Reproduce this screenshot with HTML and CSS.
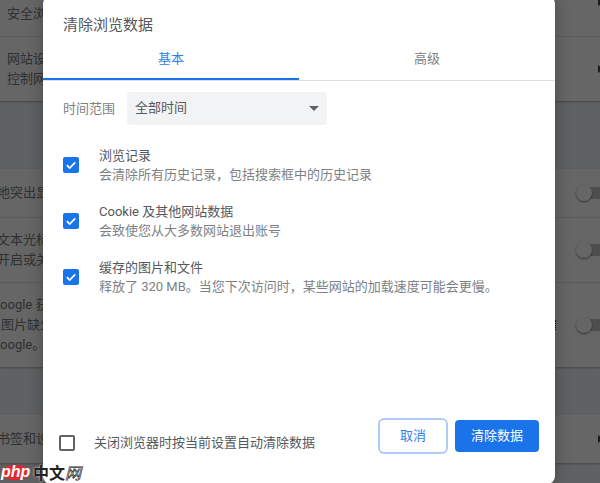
FILE: index.html
```html
<!DOCTYPE html>
<html lang="zh-CN">
<head>
<meta charset="utf-8">
<title>清除浏览数据</title>
<link rel="stylesheet" href="styles.css">
</head>
<body>
<main class="page">
  <section class="card card-first">
    <div class="row row-top"><span class="text-in">安全浏览</span><i class="arrow arrow-top"></i></div>
    <div class="row row-two"><div class="text-in"><p>网站设置</p><p>控制网站可以使用和显示什么内容</p></div><i class="arrow"></i></div>
  </section>
  <section class="card card-second">
    <div class="row row-one"><div class="text-out">短暂地突出显示焦点对象</div><span class="toggle"></span></div>
    <div class="row row-two"><div class="text-out"><p>使用文本光标浏览网页</p><p>可以开启或关闭此功能</p></div><span class="toggle"></span></div>
    <div class="row row-three"><div class="text-google"><p>从 Google 获取图片说明</p><p>如果图片缺少说明</p><p>从 Google。</p></div><span class="dots"></span><span class="toggle"></span></div>
  </section>
  <section class="card card-third">
    <div class="row row-one"><div class="text-out">同步书签和设置</div><i class="arrow"></i></div>
  </section>
</main>
<div class="scrim"></div>
<div class="dialog" role="dialog">
  <h1 class="title">清除浏览数据</h1>
  <div class="tabs">
    <div class="tab tab-active">基本</div>
    <div class="tab">高级</div>
  </div>
  <div class="range">
    <span class="range-label">时间范围</span>
    <div class="select"><span class="select-value">全部时间</span><i class="caret"></i></div>
  </div>
  <ul class="items">
    <li class="item">
      <span class="check"><svg viewBox="0 0 16 16" width="16" height="16"><path d="M3.8 8.2 6.7 11 12.2 5.3" fill="none" stroke="#fff" stroke-width="1.7"/></svg></span>
      <div><div class="item-title">浏览记录</div><div class="item-desc">会清除所有历史记录，包括搜索框中的历史记录</div></div>
    </li>
    <li class="item">
      <span class="check"><svg viewBox="0 0 16 16" width="16" height="16"><path d="M3.8 8.2 6.7 11 12.2 5.3" fill="none" stroke="#fff" stroke-width="1.7"/></svg></span>
      <div><div class="item-title">Cookie 及其他网站数据</div><div class="item-desc">会致使您从大多数网站退出账号</div></div>
    </li>
    <li class="item">
      <span class="check"><svg viewBox="0 0 16 16" width="16" height="16"><path d="M3.8 8.2 6.7 11 12.2 5.3" fill="none" stroke="#fff" stroke-width="1.7"/></svg></span>
      <div><div class="item-title">缓存的图片和文件</div><div class="item-desc">释放了 320 MB。当您下次访问时，某些网站的加载速度可能会更慢。</div></div>
    </li>
  </ul>
  <footer class="footer">
    <div class="auto"><span class="box"></span><span>关闭浏览器时按当前设置自动清除数据</span></div>
    <div class="buttons">
      <button class="btn btn-cancel" type="button">取消</button>
      <button class="btn btn-primary" type="button">清除数据</button>
    </div>
  </footer>
</div>
<div class="logo"><span class="logo-php">php</span><span class="logo-cn">中文<em>网</em></span></div>
</body>
</html>
```
FILE: styles.css
```css
* { box-sizing: border-box; }
html, body { margin: 0; height: 483px; overflow: hidden; }
body {
  position: relative;
  width: 600px;
  background: #f1f3f4;
  font: 13px/20px Roboto, "Noto Sans CJK SC", sans-serif;
  color: #7d8185;
}
p { margin: 0; }
.page { display: flex; flex-direction: column; color: #75787c; }
.card { background: #fff; box-shadow: 0 1px 2px rgba(0,0,0,.3); }
.card-second { margin-top: 68px; }
.card-third { margin-top: 48px; }
.row {
  display: flex;
  align-items: center;
  justify-content: space-between;
  white-space: nowrap;
  border-top: 1px solid #e4e4e4;
}
.row:first-child { border-top: 0; }
.row-top { height: 36px; padding-bottom: 8px; }
.row-one { height: 48px; }
.row-two { height: 65px; }
.row-three { height: 85px; }
.text-in { margin-left: 7px; }
.text-out { margin-left: -29px; }
.text-google { margin-left: -25px; flex: 1; }
.arrow {
  width: 0;
  height: 0;
  margin-right: -3px;
  border-left: 5px solid #444;
  border-top: 4px solid transparent;
  border-bottom: 4px solid transparent;
}
.arrow-top { align-self: flex-start; margin-top: -2px; }
.dots { height: 10px; margin-right: 20px; border-left: 1px dotted #222; }
.toggle {
  position: relative;
  flex: none;
  width: 24px;
  height: 16px;
  background: linear-gradient(#c4c4c4, #c4c4c4) right center / 16px 12px no-repeat;
}
.toggle::after {
  content: "";
  position: absolute;
  left: 0;
  top: 0;
  width: 16px;
  height: 16px;
  border-radius: 50%;
  background: #fff;
  box-shadow: 0 1px 2px rgba(0,0,0,.5);
}
.scrim { position: absolute; inset: 0; background: rgba(0,0,0,.6); }
.dialog {
  position: absolute;
  left: 43px;
  top: -4px;
  width: 512px;
  height: 488px;
  display: flex;
  flex-direction: column;
  background: #fff;
  border-radius: 8px;
  box-shadow: 0 0 16px rgba(0,0,0,.28);
}
.title {
  margin: 0;
  height: 42px;
  padding: 19px 0 0 20px;
  font-size: 15px;
  font-weight: 400;
  line-height: 20px;
  color: #55585c;
}
.tabs { display: flex; border-bottom: 1px solid #e0e0e0; }
.tab {
  flex: 1;
  height: 42px;
  padding-top: 2px;
  display: flex;
  align-items: center;
  justify-content: center;
  border-bottom: 2px solid transparent;
}
.tab-active { color: #2f80ea; border-bottom-color: #1a73e8; }
.range { display: flex; align-items: center; gap: 12px; margin: 11px 0 0 20px; }
.select {
  display: flex;
  align-items: center;
  justify-content: space-between;
  width: 200px;
  height: 33px;
  padding: 0 8px;
  border-radius: 4px;
  background: #f1f3f4;
}
.select-value { margin-top: -2px; color: #55585c; }
.caret {
  width: 0;
  height: 0;
  border-top: 5px solid #5f6368;
  border-left: 5px solid transparent;
  border-right: 5px solid transparent;
}
.items {
  list-style: none;
  margin: 21px 0 0;
  padding: 0 0 0 20px;
  display: flex;
  flex-direction: column;
  gap: 18px;
}
.item { display: flex; align-items: center; gap: 20px; line-height: 19px; }
.check {
  flex: none;
  display: block;
  width: 16px;
  height: 16px;
  border-radius: 2px;
  background: #1a73e8;
}
.check svg { display: block; }
.item-title { color: #55585c; }
.footer {
  margin-top: auto;
  padding: 0 16px 32px;
  display: flex;
  justify-content: space-between;
}
.auto { display: flex; align-items: center; gap: 19px; height: 16px; margin-top: 15px; color: #55585c; }
.box { width: 16px; height: 16px; border: 2px solid #5f6368; border-radius: 2px; }
.buttons { display: flex; gap: 9px; }
.btn {
  height: 32px;
  padding: 0;
  border: 0;
  border-radius: 4px;
  font: inherit;
}
.btn-cancel { width: 66px; background: #fff; color: #2f80ea; box-shadow: 0 0 0 2px #aecbfa; }
.btn-primary { width: 84px; background: #1a73e8; color: #fff; }
.logo {
  position: absolute;
  left: 1px;
  bottom: 3px;
  height: 15px;
  display: flex;
  align-items: center;
  gap: 3px;
}
.logo-php {
  width: 29px;
  height: 15px;
  border-radius: 50%;
  background: #e8262a;
  color: #fff;
  font: italic 700 16px/13px "Liberation Sans", sans-serif;
  text-align: center;
}
.logo-cn {
  font: 700 16px/15px "Noto Sans CJK SC", sans-serif;
  color: #222;
  text-shadow: 0 0 2px #fff;
}
.logo-cn em {
  font-style: italic;
  font-weight: 400;
  color: #fff;
  -webkit-text-stroke: .7px #333;
  text-shadow: none;
}
```
